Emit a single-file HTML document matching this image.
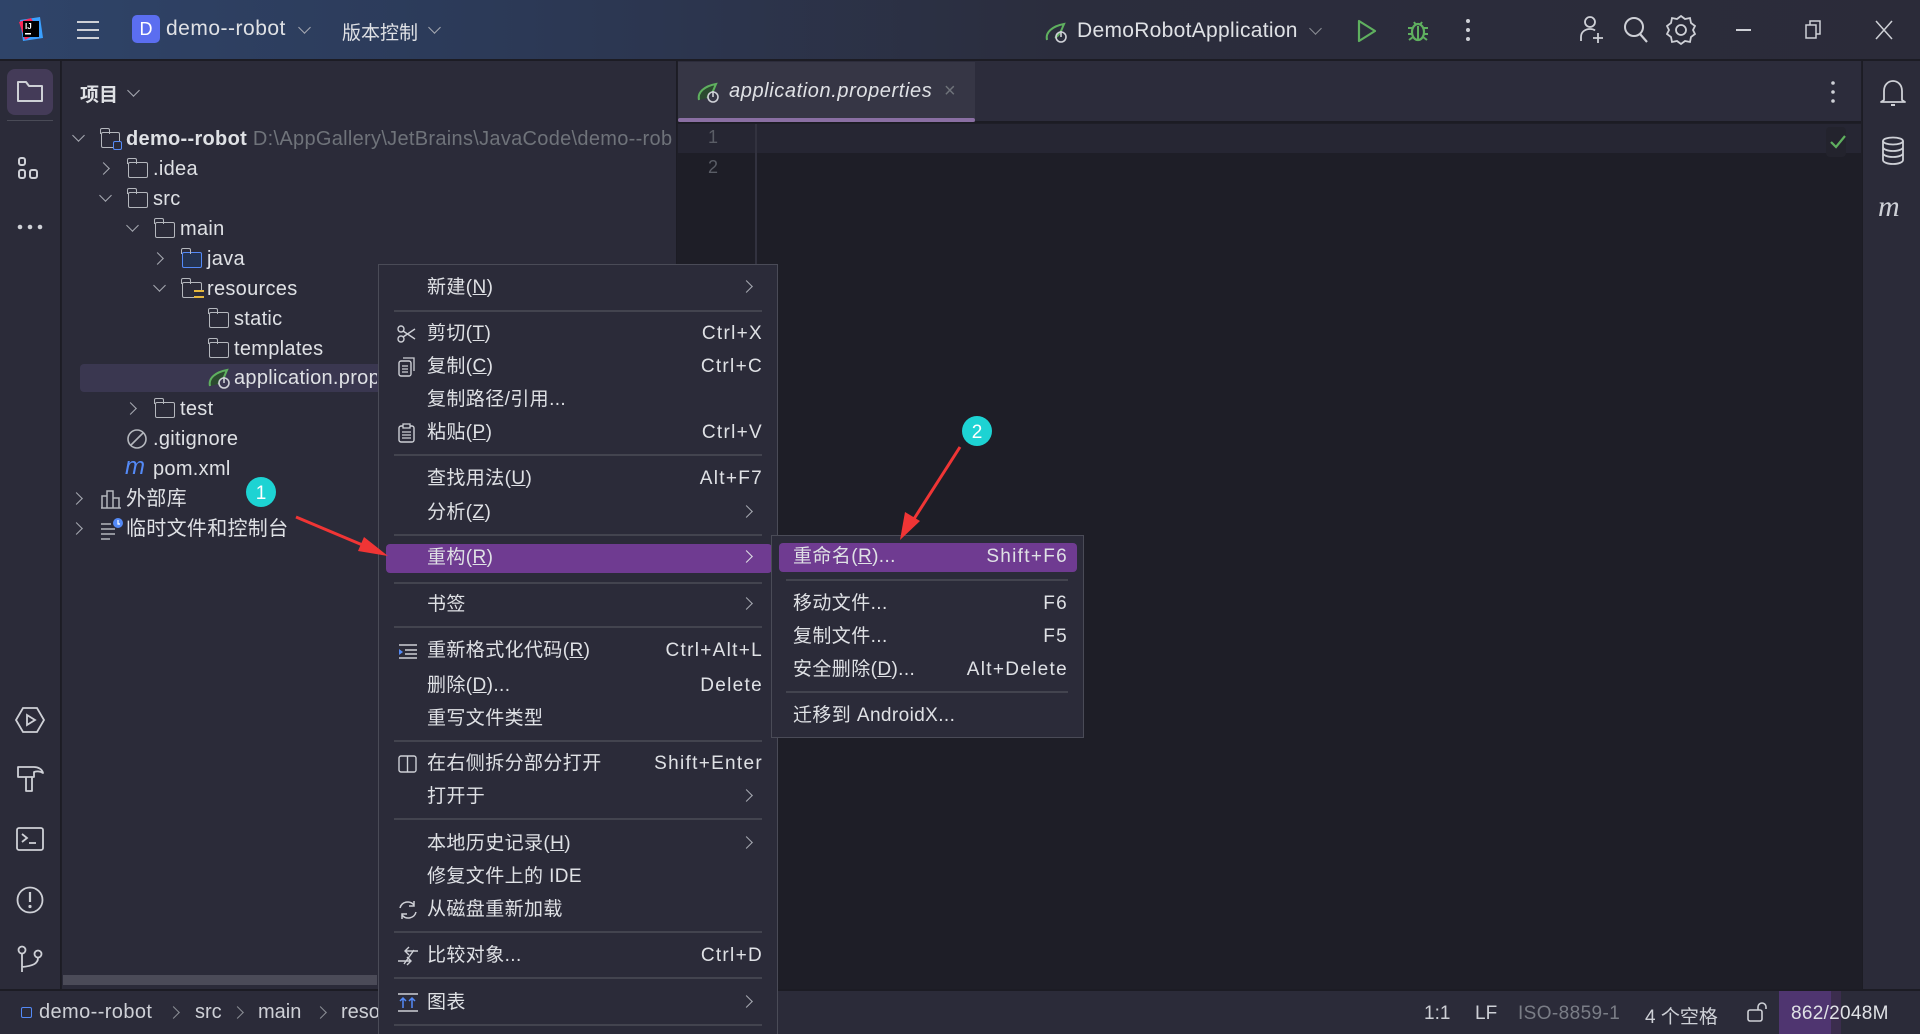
<!DOCTYPE html>
<html><head><meta charset="utf-8">
<style>
*{margin:0;padding:0;box-sizing:border-box}
body{width:1920px;height:1034px;overflow:hidden;background:#1e1e27;font-family:"Liberation Sans","Noto Sans CJK SC",sans-serif;color:#dfe1e5;font-size:18px;position:relative}
.a{position:absolute;white-space:nowrap}
.t{position:absolute;white-space:nowrap;line-height:30px;height:30px;font-size:20px;letter-spacing:0.3px}
.mi{position:absolute;white-space:nowrap;font-size:19px;line-height:30px;color:#dfe1e5;letter-spacing:0.4px}
.sc{position:absolute;white-space:nowrap;font-size:19px;line-height:30px;color:#dfe1e5;text-align:right;letter-spacing:1.3px}
.sep{position:absolute;height:2px;background:#43444f}
.chev{position:absolute;width:9px;height:9px;border-right:1.6px solid #a8abb3;border-bottom:1.6px solid #a8abb3}
.fold{position:absolute;width:20px;height:16px;border:1.6px solid #b4b7bd;border-radius:2px}
.fold:before{content:"";position:absolute;left:-1.6px;top:-5px;width:8px;height:5px;border:1.6px solid #b4b7bd;border-bottom:none;border-radius:2px 2px 0 0}
u{text-decoration:underline}
</style></head><body>
<!-- title bar -->
<div class="a" style="left:0;top:0;width:1920px;height:61px;background:linear-gradient(90deg,#2f4469 0%,#2c3a58 25%,#2b2d3d 55%,#2b2b39 100%);border-bottom:2px solid #1c1c24"></div>
<svg class="a" style="left:18px;top:16px" width="26" height="26" viewBox="0 0 26 26"><path d="M2 4l20-3 3 21-20 3z" fill="#3aa0ff"/><path d="M1 6l12-4 8 14-14 8z" fill="#fe2857"/><rect x="5" y="5" width="16" height="16" fill="#000"/><text x="7" y="13" font-size="8" fill="#fff" font-family="Liberation Sans" font-weight="bold">IJ</text><rect x="7" y="17" width="6" height="1.5" fill="#fff"/></svg>
<svg class="a" style="left:76px;top:18px" width="24" height="24"><path d="M1 4h22M1 12h22M1 20h22" stroke="#ced0d6" stroke-width="2"/></svg>
<div class="a" style="left:132px;top:15px;width:28px;height:28px;border-radius:5px;background:#5b6ef0;color:#fff;font-size:18px;line-height:28px;text-align:center">D</div>
<div class="a" style="left:166px;top:17px;font-size:21px;letter-spacing:0.5px;color:#dfe1e5">demo--robot</div>
<div class="chev" style="left:300px;top:23px;transform:rotate(45deg)"></div>
<div class="a" style="left:342px;top:18px;font-size:19px;color:#dfe1e5">版本控制</div>
<div class="chev" style="left:430px;top:23px;transform:rotate(45deg)"></div>
<svg class="a" style="left:1044px;top:20px" width="26" height="24"><path d="M3 20c-2-8 6-14 17-16-2 4-3 10-9 14" fill="none" stroke="#5fb05f" stroke-width="2"/><circle cx="17" cy="17" r="5" fill="none" stroke="#ced0d6" stroke-width="1.6"/><path d="M17 11v6" stroke="#ced0d6" stroke-width="1.6"/></svg>
<div class="a" style="left:1077px;top:19px;font-size:21px;letter-spacing:0.3px">DemoRobotApplication</div>
<div class="chev" style="left:1311px;top:24px;transform:rotate(45deg);border-color:#8c8f96"></div>
<svg class="a" style="left:1355px;top:18px" width="24" height="26"><path d="M4 3l16 10-16 10z" fill="none" stroke="#5fb05f" stroke-width="2.2" stroke-linejoin="round"/></svg>
<svg class="a" style="left:1404px;top:16px" width="28" height="28"><ellipse cx="14" cy="16" rx="6" ry="8" fill="none" stroke="#5fb05f" stroke-width="2.2"/><path d="M10 6l2 3M18 6l-2 3M4 12h4M20 12h4M4 18h4M20 18h4M5 24l4-3M23 24l-4-3M14 10v14" stroke="#5fb05f" stroke-width="2"/></svg>
<svg class="a" style="left:1464px;top:18px" width="8" height="24"><circle cx="4" cy="3" r="2" fill="#ced0d6"/><circle cx="4" cy="12" r="2" fill="#ced0d6"/><circle cx="4" cy="21" r="2" fill="#ced0d6"/></svg>
<svg class="a" style="left:1578px;top:15px" width="28" height="30"><circle cx="12" cy="7" r="5" fill="none" stroke="#ced0d6" stroke-width="1.8"/><path d="M3 26v-4c0-5 4-8 9-8 2 0 4 .5 5 1.5M20 18v10M15 23h10" fill="none" stroke="#ced0d6" stroke-width="1.8"/></svg>
<svg class="a" style="left:1622px;top:15px" width="28" height="30"><circle cx="12" cy="12" r="9" fill="none" stroke="#ced0d6" stroke-width="2"/><path d="M18 19l7 8" stroke="#ced0d6" stroke-width="2.2"/></svg>
<svg class="a" style="left:1666px;top:14px" width="30" height="32" viewBox="0 0 30 32"><path d="M15 2l4 3 5-1 1 5 4 3-2 4 2 4-4 3-1 5-5-1-4 3-4-3-5 1-1-5-4-3 2-4-2-4 4-3 1-5 5 1z" fill="none" stroke="#ced0d6" stroke-width="1.8"/><circle cx="15" cy="16" r="5" fill="none" stroke="#ced0d6" stroke-width="1.8"/></svg>
<div class="a" style="left:1736px;top:29px;width:15px;height:1.6px;background:#ced0d6"></div>
<svg class="a" style="left:1805px;top:20px" width="18" height="20"><rect x="1" y="5" width="10" height="13" fill="none" stroke="#ced0d6" stroke-width="1.5"/><path d="M5 5V1h10v13h-4" fill="none" stroke="#ced0d6" stroke-width="1.5"/></svg>
<svg class="a" style="left:1875px;top:20px" width="18" height="20"><path d="M1 1l16 18M17 1L1 19" stroke="#ced0d6" stroke-width="1.5"/></svg>

<!-- left strip -->
<div class="a" style="left:0;top:61px;width:61px;height:928px;background:#2b2b39;border-right:1px solid #1c1c24"></div>
<div class="a" style="left:7px;top:69px;width:46px;height:46px;border-radius:8px;background:#443b58"></div>
<svg class="a" style="left:16px;top:79px" width="28" height="26"><path d="M2 4v18h24V7H13l-3-4H2z" fill="none" stroke="#ced0d6" stroke-width="2" stroke-linejoin="round"/></svg>
<div class="a" style="left:7px;top:120px;width:46px;height:1px;background:#4a4b57"></div>
<svg class="a" style="left:17px;top:156px" width="26" height="26"><rect x="2" y="2" width="6" height="7" rx="2" fill="none" stroke="#ced0d6" stroke-width="2"/><rect x="2" y="14" width="6" height="8" rx="2" fill="none" stroke="#ced0d6" stroke-width="2"/><rect x="13" y="14" width="7" height="8" rx="2" fill="none" stroke="#ced0d6" stroke-width="2"/></svg>
<svg class="a" style="left:16px;top:222px" width="28" height="10"><circle cx="4" cy="5" r="2.3" fill="#ced0d6"/><circle cx="14" cy="5" r="2.3" fill="#ced0d6"/><circle cx="24" cy="5" r="2.3" fill="#ced0d6"/></svg>
<svg class="a" style="left:14px;top:706px" width="32" height="28"><path d="M9 2h14l7 12-7 12H9L2 14z" fill="none" stroke="#ced0d6" stroke-width="1.8"/><path d="M13 9l8 5-8 5z" fill="none" stroke="#ced0d6" stroke-width="1.8"/></svg>
<svg class="a" style="left:15px;top:764px" width="30" height="30"><path d="M3 3h16c4 0 8 2 9 6-3-2-6-2-9-1v5H3zM11 13h6v14h-6z" fill="none" stroke="#ced0d6" stroke-width="1.8" stroke-linejoin="round"/></svg>
<svg class="a" style="left:15px;top:826px" width="30" height="26"><rect x="2" y="2" width="26" height="22" rx="2" fill="none" stroke="#ced0d6" stroke-width="1.8"/><path d="M7 8l5 4-5 4M14 17h7" fill="none" stroke="#ced0d6" stroke-width="1.8"/></svg>
<svg class="a" style="left:15px;top:885px" width="30" height="30"><circle cx="15" cy="15" r="12.5" fill="none" stroke="#ced0d6" stroke-width="1.8"/><path d="M15 7v10" stroke="#ced0d6" stroke-width="2.2"/><circle cx="15" cy="21.5" r="1.6" fill="#ced0d6"/></svg>
<svg class="a" style="left:16px;top:944px" width="28" height="30"><circle cx="6" cy="6" r="3.5" fill="none" stroke="#ced0d6" stroke-width="1.8"/><circle cx="22" cy="10" r="3.5" fill="none" stroke="#ced0d6" stroke-width="1.8"/><path d="M6 10v18M22 14c0 6-6 8-16 9" fill="none" stroke="#ced0d6" stroke-width="1.8"/></svg>

<!-- project panel -->
<div class="a" style="left:62px;top:61px;width:615px;height:928px;background:#2b2b39;border-right:1px solid #1c1c24"></div>
<div class="a" style="left:80px;top:80px;font-size:19px;font-weight:bold;color:#dfe1e5">项目</div>
<div class="chev" style="left:129px;top:86px;transform:rotate(45deg);border-color:#a8abb3"></div>
<div class="a" style="left:80px;top:364px;width:300px;height:28px;background:#3a3750;border-radius:4px 0 0 4px"></div>
<!-- tree -->
<div class="chev" style="left:74px;top:131px;transform:rotate(45deg)"></div>
<div class="fold" style="left:101px;top:132px;width:19px"></div><div class="a" style="left:113px;top:141px;width:9px;height:9px;border:1.6px solid #548af7;border-radius:2px;background:#2b2b39"></div>
<div class="t" style="left:126px;top:124px;font-weight:bold">demo--robot <span style="font-weight:normal;color:#6f737a">D:\AppGallery\JetBrains\JavaCode\demo--rob</span></div>
<div class="chev" style="left:99px;top:164px;transform:rotate(-45deg)"></div>
<div class="fold" style="left:128px;top:162px"></div><div class="t" style="left:153px;top:154px">.idea</div>
<div class="chev" style="left:101px;top:191px;transform:rotate(45deg)"></div>
<div class="fold" style="left:128px;top:192px"></div><div class="t" style="left:153px;top:184px">src</div>
<div class="chev" style="left:128px;top:221px;transform:rotate(45deg)"></div>
<div class="fold" style="left:155px;top:222px"></div><div class="t" style="left:180px;top:214px">main</div>
<div class="chev" style="left:153px;top:254px;transform:rotate(-45deg)"></div>
<div class="fold" style="left:182px;top:252px;border-color:#548af7;background:#243350"></div><div class="t" style="left:207px;top:244px">java</div>
<div class="chev" style="left:155px;top:281px;transform:rotate(45deg)"></div>
<div class="fold" style="left:182px;top:282px"></div><div class="a" style="left:194px;top:290px;width:10px;height:8px;border-top:2px solid #e5b73d;border-bottom:2px solid #e5b73d;background:#2b2b39"></div><div class="t" style="left:207px;top:274px">resources</div>
<div class="fold" style="left:209px;top:312px"></div><div class="t" style="left:234px;top:304px">static</div>
<div class="fold" style="left:209px;top:342px"></div><div class="t" style="left:234px;top:334px">templates</div>
<svg class="a" style="left:207px;top:366px" width="26" height="24"><path d="M3 20c-2-8 6-14 17-16-2 4-3 10-9 14" fill="#2b4a2f" stroke="#5fb05f" stroke-width="2"/><circle cx="17" cy="17" r="5" fill="#3a3750" stroke="#ced0d6" stroke-width="1.6"/><path d="M17 11v6" stroke="#ced0d6" stroke-width="1.6"/></svg>
<div class="t" style="left:234px;top:363px;width:143px;overflow:hidden">application.properties</div>
<div class="chev" style="left:126px;top:404px;transform:rotate(-45deg)"></div>
<div class="fold" style="left:155px;top:402px"></div><div class="t" style="left:180px;top:394px">test</div>
<svg class="a" style="left:126px;top:428px" width="22" height="22"><circle cx="11" cy="11" r="9" fill="none" stroke="#b4b7bd" stroke-width="1.6"/><path d="M5 17L17 5" stroke="#b4b7bd" stroke-width="1.6"/></svg>
<div class="t" style="left:153px;top:424px">.gitignore</div>
<div class="t" style="left:125px;top:452px;font-style:italic;color:#548af7;font-size:24px">m</div>
<div class="t" style="left:153px;top:454px">pom.xml</div>
<div class="chev" style="left:72px;top:494px;transform:rotate(-45deg)"></div>
<svg class="a" style="left:100px;top:488px" width="22" height="22"><path d="M2 20V8h5v12M7 20V3h6v17M13 20V10h6v10zM1 20h20" fill="none" stroke="#b4b7bd" stroke-width="1.5"/></svg>
<div class="t" style="left:126px;top:484px">外部库</div>
<div class="chev" style="left:72px;top:524px;transform:rotate(-45deg)"></div>
<svg class="a" style="left:100px;top:516px" width="24" height="24"><path d="M1 8h10M1 13h14M1 18h14M1 23h9" stroke="#b4b7bd" stroke-width="1.5"/><circle cx="18" cy="7" r="5" fill="#548af7"/><path d="M18 4v4h2" stroke="#fff" stroke-width="1.2" fill="none"/></svg>
<div class="t" style="left:126px;top:514px">临时文件和控制台</div>
<div class="a" style="left:63px;top:975px;width:314px;height:10px;background:#4b4b58"></div>

<!-- editor -->
<div class="a" style="left:678px;top:61px;width:1183px;height:62px;background:#2c2c3b;border-bottom:2px solid #1c1c24"></div>
<div class="a" style="left:678px;top:62px;width:297px;height:60px;background:#363645"></div>
<div class="a" style="left:678px;top:118px;width:297px;height:4px;border-radius:2px;background:#8a6fa3"></div>
<svg class="a" style="left:696px;top:80px" width="26" height="24"><path d="M3 20c-2-8 6-14 17-16-2 4-3 10-9 14" fill="#2b4a2f" stroke="#5fb05f" stroke-width="2"/><circle cx="17" cy="17" r="5" fill="#363645" stroke="#ced0d6" stroke-width="1.6"/><path d="M17 11v6" stroke="#ced0d6" stroke-width="1.6"/></svg>
<div class="a" style="left:729px;top:80px;font-size:20px;letter-spacing:0.6px;font-style:italic;color:#dfe1e5">application.properties</div>
<div class="a" style="left:944px;top:80px;font-size:20px;color:#6f737a">×</div>
<svg class="a" style="left:1830px;top:80px" width="6" height="24"><circle cx="3" cy="3" r="1.8" fill="#ced0d6"/><circle cx="3" cy="12" r="1.8" fill="#ced0d6"/><circle cx="3" cy="21" r="1.8" fill="#ced0d6"/></svg>
<div class="a" style="left:678px;top:124px;width:1183px;height:29px;background:#262633"></div>
<div class="a" style="left:755px;top:124px;width:2px;height:865px;background:#32323f"></div>
<div class="a" style="left:708px;top:127px;font-size:18px;color:#5a5d66">1</div>
<div class="a" style="left:708px;top:157px;font-size:18px;color:#5a5d66">2</div>
<div class="a" style="left:1826px;top:127px;width:20px;height:30px;background:#23232d;border-radius:4px"></div>
<svg class="a" style="left:1829px;top:134px" width="18" height="16"><path d="M2 8l5 5 9-11" fill="none" stroke="#5fb05f" stroke-width="2.2"/></svg>

<!-- right strip -->
<div class="a" style="left:1862px;top:61px;width:58px;height:928px;background:#2b2b39;border-left:1px solid #1c1c24"></div>
<svg class="a" style="left:1879px;top:78px" width="28" height="30"><path d="M5 22V13c0-6 4-10 9-10s9 4 9 10v9l3 2H2z" fill="none" stroke="#ced0d6" stroke-width="1.8" stroke-linejoin="round"/><path d="M12 27h4" stroke="#ced0d6" stroke-width="2"/></svg>
<svg class="a" style="left:1880px;top:136px" width="26" height="30"><ellipse cx="13" cy="5" rx="10" ry="3.5" fill="none" stroke="#ced0d6" stroke-width="1.8"/><path d="M3 5v19c0 2 4 4 10 4s10-2 10-4V5M3 11c0 2 4 4 10 4s10-2 10-4M3 17c0 2 4 4 10 4s10-2 10-4" fill="none" stroke="#ced0d6" stroke-width="1.8"/></svg>
<div class="a" style="left:1878px;top:190px;font-size:30px;font-style:italic;color:#ced0d6;font-family:'Liberation Serif',serif">m</div>

<!-- status bar -->
<div class="a" style="left:0;top:989px;width:1920px;height:45px;background:#2b2b39;border-top:2px solid #1c1c24"></div>
<div class="a" style="left:21px;top:1007px;width:11px;height:11px;border:1.6px solid #548af7;border-radius:2px"></div>
<div class="a" style="left:39px;top:1001px;font-size:20px;letter-spacing:0.4px;color:#ced0d6">demo--robot</div>
<div class="chev" style="left:169px;top:1008px;transform:rotate(-45deg);border-color:#8c8f96"></div>
<div class="a" style="left:195px;top:1001px;font-size:20px;color:#ced0d6">src</div>
<div class="chev" style="left:233px;top:1008px;transform:rotate(-45deg);border-color:#8c8f96"></div>
<div class="a" style="left:258px;top:1001px;font-size:20px;color:#ced0d6">main</div>
<div class="chev" style="left:316px;top:1008px;transform:rotate(-45deg);border-color:#8c8f96"></div>
<div class="a" style="left:341px;top:1001px;font-size:20px;color:#ced0d6">reso</div>
<div class="a" style="left:1424px;top:1003px;font-size:19px;color:#ced0d6">1:1</div>
<div class="a" style="left:1475px;top:1003px;font-size:19px;color:#ced0d6">LF</div>
<div class="a" style="left:1518px;top:1003px;font-size:19px;letter-spacing:0.4px;color:#7a7d86">ISO-8859-1</div>
<div class="a" style="left:1645px;top:1002px;font-size:19px;color:#ced0d6">4 个空格</div>
<svg class="a" style="left:1746px;top:1001px" width="24" height="22"><rect x="2" y="9" width="14" height="11" rx="2" fill="none" stroke="#ced0d6" stroke-width="1.6"/><path d="M12 9V6a4 4 0 018 0v2" fill="none" stroke="#ced0d6" stroke-width="1.6"/></svg>
<div class="a" style="left:1779px;top:991px;width:52px;height:43px;background:#4f3570"></div>
<div class="a" style="left:1831px;top:991px;width:10px;height:43px;background:#3b2d4d"></div>
<div class="a" style="left:1791px;top:1003px;font-size:19px;letter-spacing:0.3px;color:#dfe1e5">862/2048M</div>

<!-- context menu -->
<div class="a" style="left:378px;top:264px;width:400px;height:770px;background:#2b2b39;border:1px solid #4a4b57;border-bottom:none"></div>
<div class="mi" style="left:427px;top:273px">新建(<u>N</u>)</div>
<div class="chev" style="left:742px;top:282px;transform:rotate(-45deg)"></div>
<div class="sep" style="left:394px;top:310px;width:368px"></div>
<svg class="a" style="left:397px;top:325px" width="20" height="18"><circle cx="4" cy="4" r="3" fill="none" stroke="#ced0d6" stroke-width="1.4"/><circle cx="4" cy="14" r="3" fill="none" stroke="#ced0d6" stroke-width="1.4"/><path d="M6 6l12 8M6 12l12-8" stroke="#ced0d6" stroke-width="1.4"/></svg>
<div class="mi" style="left:427px;top:319px">剪切(<u>T</u>)</div><div class="sc" style="right:1157px;top:319px">Ctrl+X</div>
<svg class="a" style="left:398px;top:357px" width="18" height="20"><rect x="1" y="4" width="12" height="15" rx="2" fill="none" stroke="#ced0d6" stroke-width="1.4"/><path d="M5 1h11v13M4 9h6M4 12h6M4 15h6" fill="none" stroke="#ced0d6" stroke-width="1.3"/></svg>
<div class="mi" style="left:427px;top:352px">复制(<u>C</u>)</div><div class="sc" style="right:1157px;top:352px">Ctrl+C</div>
<div class="mi" style="left:427px;top:385px">复制路径/引用...</div>
<svg class="a" style="left:398px;top:423px" width="18" height="20"><rect x="1" y="3" width="15" height="16" rx="2" fill="none" stroke="#ced0d6" stroke-width="1.4"/><rect x="5" y="1" width="7" height="4" fill="#2b2b39" stroke="#ced0d6" stroke-width="1.3"/><path d="M4 9h9M4 12h9M4 15h9" stroke="#ced0d6" stroke-width="1.3"/></svg>
<div class="mi" style="left:427px;top:418px">粘贴(<u>P</u>)</div><div class="sc" style="right:1157px;top:418px">Ctrl+V</div>
<div class="sep" style="left:394px;top:454px;width:368px"></div>
<div class="mi" style="left:427px;top:464px">查找用法(<u>U</u>)</div><div class="sc" style="right:1157px;top:464px">Alt+F7</div>
<div class="mi" style="left:427px;top:498px">分析(<u>Z</u>)</div>
<div class="chev" style="left:742px;top:507px;transform:rotate(-45deg)"></div>
<div class="sep" style="left:394px;top:534px;width:368px"></div>
<div class="a" style="left:386px;top:544px;width:386px;height:29px;background:#6f3b91;border-radius:4px"></div>
<div class="mi" style="left:427px;top:543px">重构(<u>R</u>)</div>
<div class="chev" style="left:742px;top:552px;transform:rotate(-45deg);border-color:#dfe1e5"></div>
<div class="sep" style="left:394px;top:582px;width:368px"></div>
<div class="mi" style="left:427px;top:590px">书签</div>
<div class="chev" style="left:742px;top:599px;transform:rotate(-45deg)"></div>
<div class="sep" style="left:394px;top:626px;width:368px"></div>
<svg class="a" style="left:398px;top:643px" width="20" height="16"><path d="M1 2h18M7 7h12M7 11h12M1 15h18" stroke="#ced0d6" stroke-width="1.4"/><path d="M1 6l4 3-4 3z" fill="#548af7"/></svg>
<div class="mi" style="left:427px;top:636px">重新格式化代码(<u>R</u>)</div><div class="sc" style="right:1157px;top:636px">Ctrl+Alt+L</div>
<div class="mi" style="left:427px;top:671px">删除(<u>D</u>)...</div><div class="sc" style="right:1157px;top:671px">Delete</div>
<div class="mi" style="left:427px;top:704px">重写文件类型</div>
<div class="sep" style="left:394px;top:740px;width:368px"></div>
<svg class="a" style="left:398px;top:755px" width="19" height="18"><rect x="1" y="1" width="17" height="16" rx="2" fill="none" stroke="#ced0d6" stroke-width="1.4"/><path d="M9.5 1v16" stroke="#ced0d6" stroke-width="1.4"/></svg>
<div class="mi" style="left:427px;top:749px">在右侧拆分部分打开</div><div class="sc" style="right:1157px;top:749px">Shift+Enter</div>
<div class="mi" style="left:427px;top:782px">打开于</div>
<div class="chev" style="left:742px;top:791px;transform:rotate(-45deg)"></div>
<div class="sep" style="left:394px;top:818px;width:368px"></div>
<div class="mi" style="left:427px;top:829px">本地历史记录(<u>H</u>)</div>
<div class="chev" style="left:742px;top:838px;transform:rotate(-45deg)"></div>
<div class="mi" style="left:427px;top:862px">修复文件上的 IDE</div>
<svg class="a" style="left:396px;top:899px" width="24" height="22"><path d="M4 9a8 8 0 0114-3M20 13a8 8 0 01-14 3" fill="none" stroke="#ced0d6" stroke-width="1.5"/><path d="M18 2v5h-5M6 20v-5h5" fill="none" stroke="#ced0d6" stroke-width="1.5"/></svg>
<div class="mi" style="left:427px;top:895px">从磁盘重新加载</div>
<div class="sep" style="left:394px;top:931px;width:368px"></div>
<svg class="a" style="left:396px;top:945px" width="24" height="22"><path d="M10 6h12M13 2l-4 4 4 4M2 16h12M11 12l4 4-4 4M8 19l10-14" fill="none" stroke="#ced0d6" stroke-width="1.4"/></svg>
<div class="mi" style="left:427px;top:941px">比较对象...</div><div class="sc" style="right:1157px;top:941px">Ctrl+D</div>
<div class="sep" style="left:394px;top:977px;width:368px"></div>
<svg class="a" style="left:397px;top:993px" width="22" height="20"><path d="M1 1h20M1 18h20" stroke="#ced0d6" stroke-width="1.5"/><path d="M6 15V5M3 8l3-3 3 3M15 15V5M12 8l3-3 3 3" fill="none" stroke="#548af7" stroke-width="1.5"/></svg>
<div class="mi" style="left:427px;top:988px">图表</div>
<div class="chev" style="left:742px;top:997px;transform:rotate(-45deg)"></div>
<div class="sep" style="left:394px;top:1024px;width:368px"></div>

<!-- submenu -->
<div class="a" style="left:771px;top:535px;width:313px;height:203px;background:#2b2b39;border:1px solid #4a4b57"></div>
<div class="a" style="left:779px;top:543px;width:298px;height:29px;background:#6f3b91;border-radius:4px"></div>
<div class="mi" style="left:793px;top:542px">重命名(<u>R</u>)...</div><div class="sc" style="right:852px;top:542px">Shift+F6</div>
<div class="sep" style="left:786px;top:579px;width:282px"></div>
<div class="mi" style="left:793px;top:589px">移动文件...</div><div class="sc" style="right:852px;top:589px">F6</div>
<div class="mi" style="left:793px;top:622px">复制文件...</div><div class="sc" style="right:852px;top:622px">F5</div>
<div class="mi" style="left:793px;top:655px">安全删除(<u>D</u>)...</div><div class="sc" style="right:852px;top:655px">Alt+Delete</div>
<div class="sep" style="left:786px;top:691px;width:282px"></div>
<div class="mi" style="left:793px;top:701px">迁移到 AndroidX...</div>

<!-- annotations -->
<svg class="a" style="left:0;top:0" width="1920" height="1034" viewBox="0 0 1920 1034">
<path d="M296 517L372 549" stroke="#f03535" stroke-width="3"/><path d="M388 556L364 537 358 551z" fill="#f03535"/>
<path d="M960 447L912 522" stroke="#f03535" stroke-width="3"/><path d="M900 540L905 512 920 521z" fill="#f03535"/>
<circle cx="261" cy="492" r="15" fill="#1dd3d3"/><text x="261" y="499" text-anchor="middle" font-size="19" fill="#fff" font-family="Liberation Sans">1</text>
<circle cx="977" cy="431" r="15" fill="#1dd3d3"/><text x="977" y="438" text-anchor="middle" font-size="19" fill="#fff" font-family="Liberation Sans">2</text>
</svg>
</body></html>
